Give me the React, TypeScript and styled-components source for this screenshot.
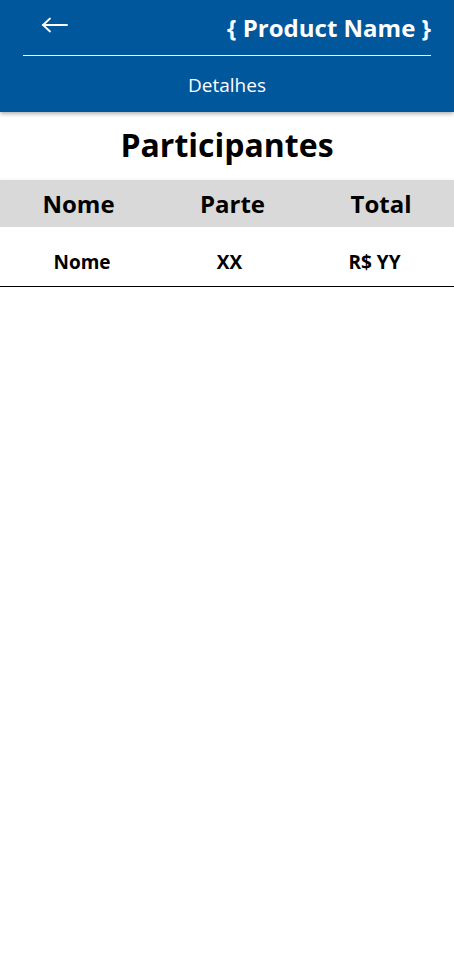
import React from "react";
import styled, { createGlobalStyle } from "styled-components";

const Global = createGlobalStyle`
  html, body { margin: 0; padding: 0; background: #fff; }
  body { font-family: "Open Sans", "Noto Sans", sans-serif; }
  * { box-sizing: border-box; }
`;

const Page = styled.div`
  width: 454px;
  min-height: 965px;
  background: #fff;
`;

const Header = styled.header`
  background: #01579b;
  height: 112px;
  padding: 0 23px;
  display: flex;
  flex-direction: column;
  box-shadow: 0 2px 4px rgba(0, 0, 0, 0.3);
  position: relative;
  z-index: 2;
`;

const TopRow = styled.div`
  height: 56px;
  display: flex;
  align-items: center;
  justify-content: space-between;
  border-bottom: 1px solid #ffffff;
  padding-left: 18px;
`;

const BackButton = styled.button`
  background: none;
  border: none;
  padding: 0;
  margin-top: -6px;
  display: flex;
  cursor: pointer;
`;

const ProductName = styled.h1`
  margin: 0;
  color: #fff;
  font-size: 24px;
  font-weight: 700;
  margin-top: 0;
`;

const SubTitle = styled.div`
  flex: 1;
  display: flex;
  align-items: center;
  justify-content: center;
  color: #fff;
  font-size: 19px;
  padding-top: 1px;
`;

const SectionTitle = styled.h2`
  margin: 0;
  height: 68px;
  display: flex;
  align-items: center;
  justify-content: center;
  font-size: 32px;
  font-weight: 700;
  color: #000;
  padding-bottom: 4px;
`;

const Row = styled.div<{ $head?: boolean }>`
  display: grid;
  grid-template-columns: ${(p) => (p.$head ? "157px 151px 146px" : "164px 131px 159px")};
  align-items: center;
  height: ${(p) => (p.$head ? "47px" : "60px")};
  background: ${(p) => (p.$head ? "#d9d9d9" : "#fff")};
  box-shadow: ${(p) => (p.$head ? "0 2px 4px rgba(0,0,0,0.25)" : "none")};
  border-bottom: ${(p) => (p.$head ? "none" : "1px solid #000")};
  font-size: ${(p) => (p.$head ? "24px" : "19px")};
  font-weight: 700;
  color: #000;
  position: relative;
  padding-top: ${(p) => (p.$head ? "0" : "10px")};
`;

const Cell = styled.div`
  text-align: center;
`;

export default function App() {
  return (
    <Page>
      <Global />
      <Header>
        <TopRow>
          <BackButton aria-label="Voltar">
            <svg width="28" height="16" viewBox="0 0 28 16" fill="none" stroke="#fff" strokeWidth="1.8" strokeLinecap="round">
              <line x1="2" y1="8" x2="26" y2="8" />
              <polyline points="9,1.5 2,8 9,14.5" />
            </svg>
          </BackButton>
          <ProductName>{"{ Product Name }"}</ProductName>
        </TopRow>
        <SubTitle>Detalhes</SubTitle>
      </Header>
      <SectionTitle>Participantes</SectionTitle>
      <Row $head>
        <Cell>Nome</Cell>
        <Cell>Parte</Cell>
        <Cell>Total</Cell>
      </Row>
      <Row>
        <Cell>Nome</Cell>
        <Cell>XX</Cell>
        <Cell>R$ YY</Cell>
      </Row>
    </Page>
  );
}
